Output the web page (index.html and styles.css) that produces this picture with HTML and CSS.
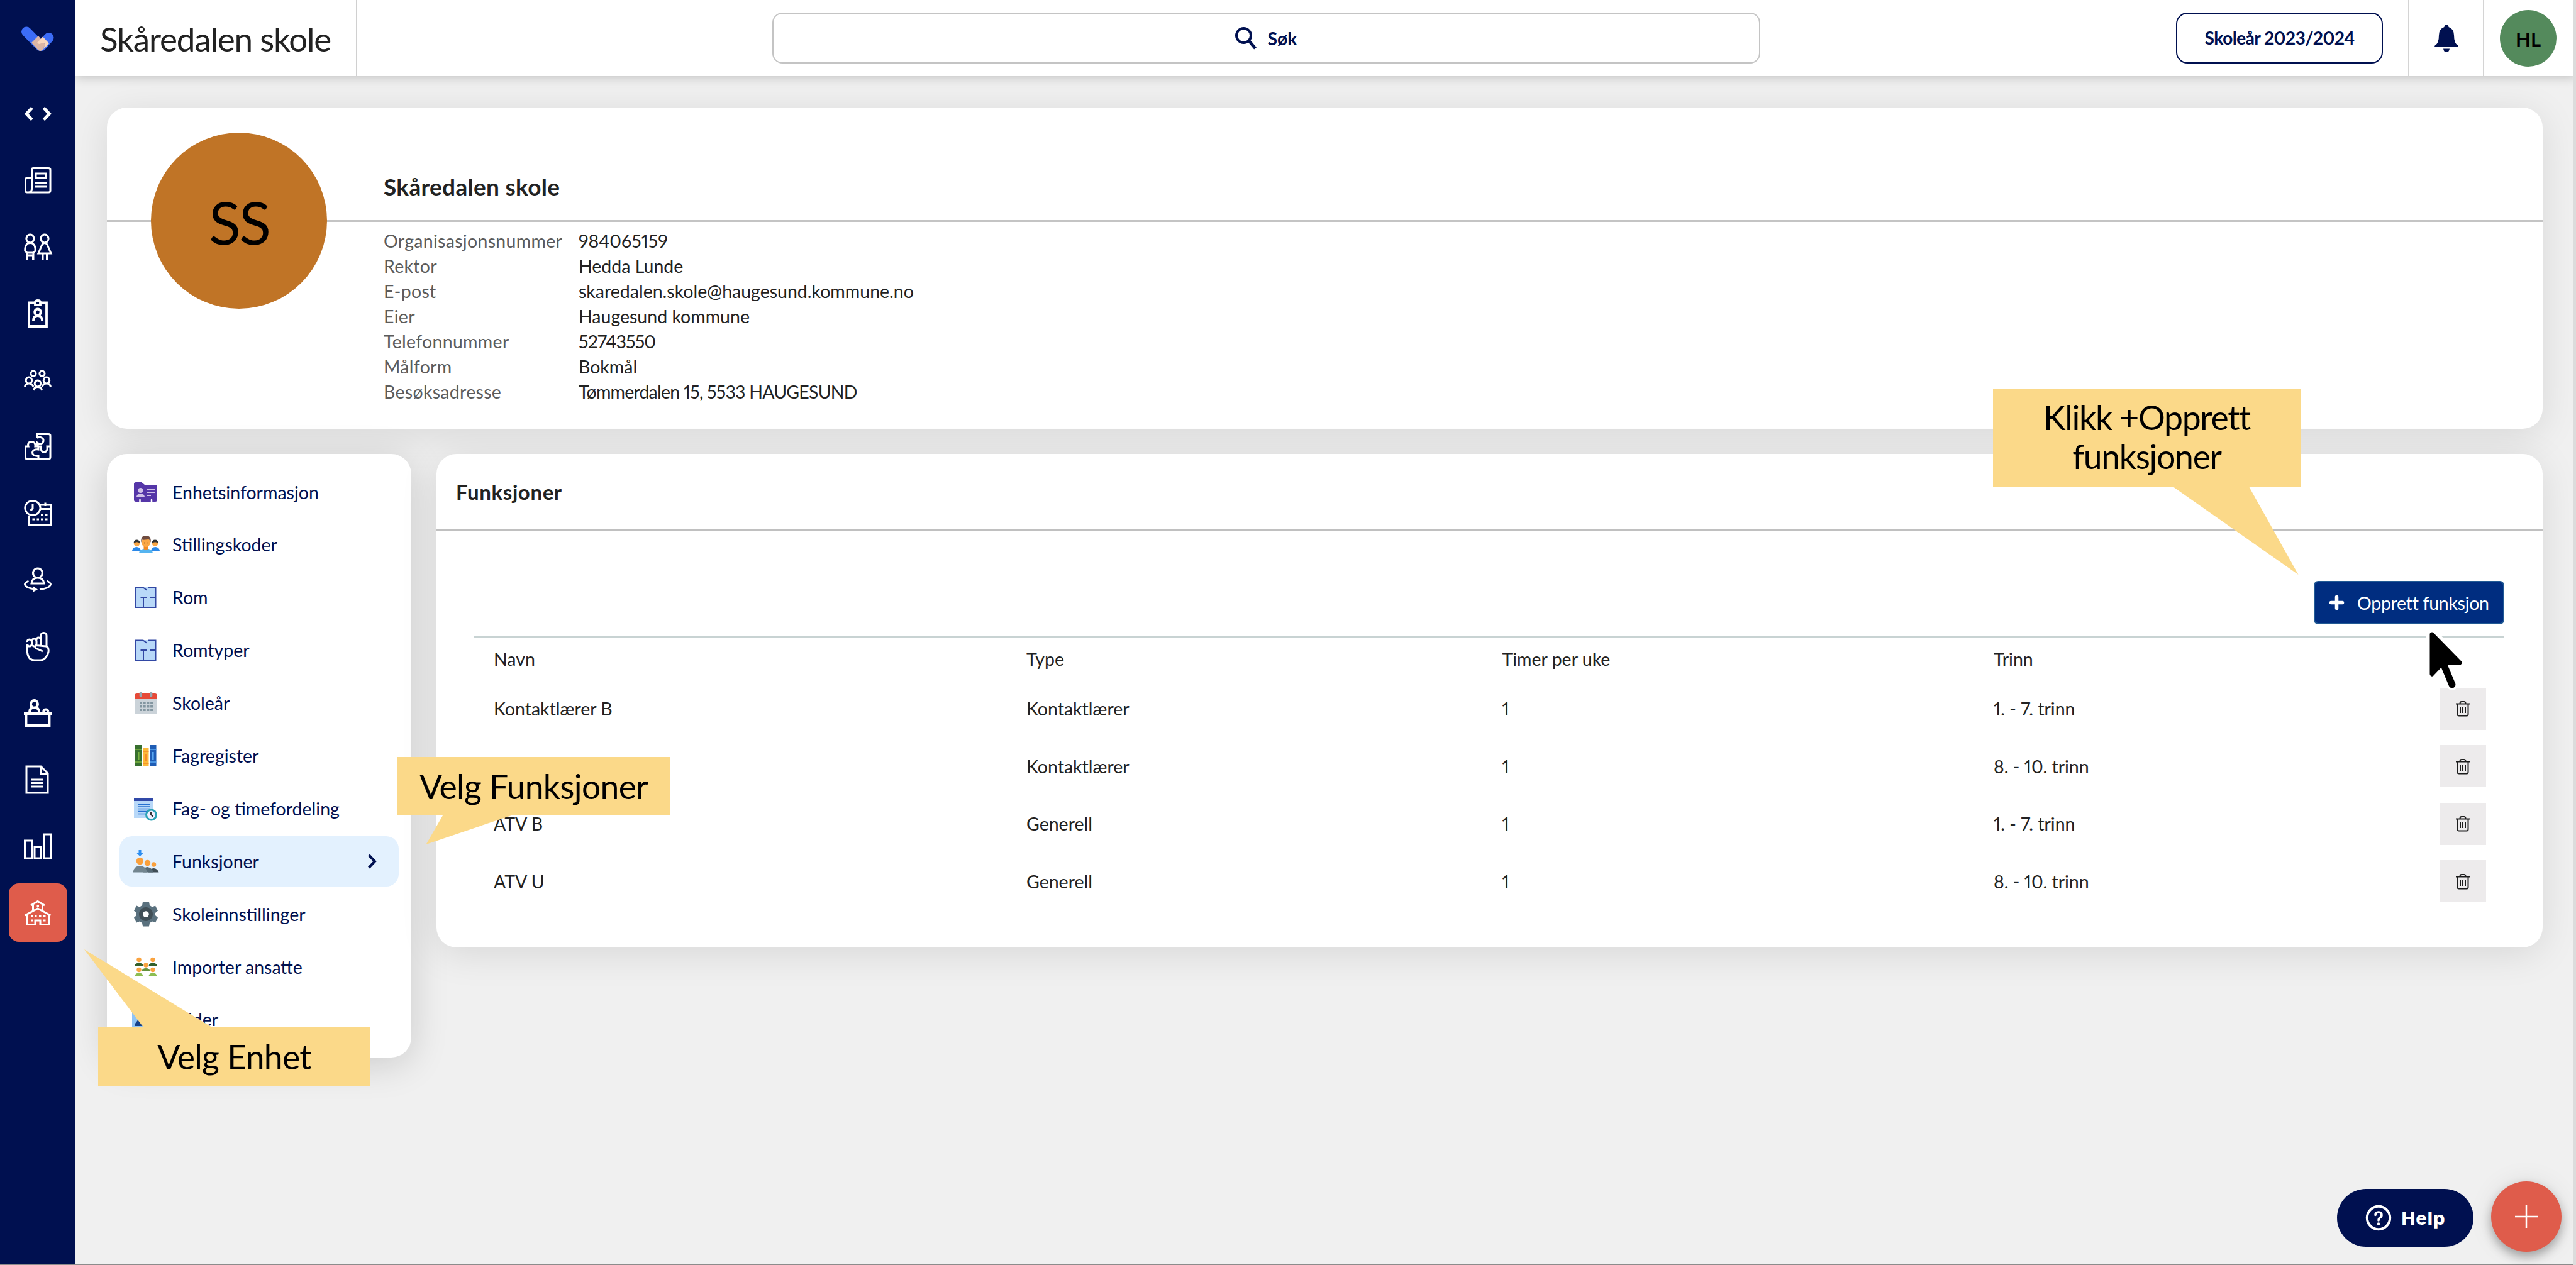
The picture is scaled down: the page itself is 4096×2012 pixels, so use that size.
FILE: index.html
```html
<!DOCTYPE html>
<html lang="no">

<head>
    <meta charset="UTF-8">
    <meta name="viewport" content="width=device-width, initial-scale=1.0">
    <title>Skåredalen skole - Funksjoner</title>
    <link rel="stylesheet" href="styles.css">
</head>

<body>
    <nav class="sidebar">
        <div class="logo">
            <svg width="52" height="40" viewBox="0 0 52 40">
                <path d="M8 8.5 L30 31" stroke="#3c6cf7" stroke-width="16" stroke-linecap="round"/>
                <path d="M43.500 18 L32 31" stroke="#3c6cf7" stroke-width="16" stroke-linecap="round"/>
                <path d="M16 26 L27 15 L38 29 L34 37 Q30 41 26 37 Z" fill="#dcb5a5"/>
                <path d="M25 26 L34 16.500 L44 27 L35 36.500 L38 28 Q36 25 28 28 Z" fill="#fbd7bd"/>
            </svg>
        </div>
        <a class="nav-item">
            <svg width="44" height="44" viewBox="0 0 44 44"><path class="arrows" d="M13 12.500 L4 22 L13 31.500 M31.500 12.500 L40.500 22 L31.500 31.500"/></svg>
        </a>
        <a class="nav-item">
            <svg width="44" height="44" viewBox="0 0 44 44"><path d="M12.500 5 Q12.500 2.500 15 2.500 H39 Q42 2.500 42 5 V38 Q42 41 39 41 H5 Q2.500 41 2.500 38 V21 Q2.500 18 5 18 H12 M12.500 5 V36 Q12 41 7 41"/><path d="M19 11 H35 V18.500 H19 Z M18 26 H36 M18 32 H36"/></svg>
        </a>
        <a class="nav-item">
            <svg width="44" height="44" viewBox="0 0 44 44"><path d="M10 2 A6 6.500 0 1 1 9.900 2 Z M33 2 A6 6.500 0 1 1 32.900 2 Z M5 42 V31 L1.800 28 Q1.500 15.500 10 15.500 Q18.500 15.500 18.200 28 L15 31 V42 M5 31 H15 M5.500 35 H14.500 V42 M5.500 42 V34"/><path d="M30 32 H23 L29 18 Q33 13 37 18 L43 32 H30 V43 M36.500 32 V43"/></svg>
        </a>
        <a class="nav-item">
            <svg width="44" height="46" viewBox="0 0 44 46"><path class="thick" d="M18 5.500 H8 V43 H36 V5.500 H26"/><path class="thick" d="M18 9 V5 Q18 2 22 2 Q26 2 26 5 V9 Z M22 15.500 A4.800 5 0 1 1 21.900 15.500 Z M15 34 Q15 26 22 26 Q29 26 29 34"/></svg>
        </a>
        <a class="nav-item">
            <svg width="44" height="36" viewBox="0 0 44 36"><path d="M15 3 A4.200 4.200 0 1 1 14.900 3 Z M29 3 A4.200 4.200 0 1 1 28.900 3 Z M8 13 A4.800 5 0 1 1 7.900 13 Z M36 13 A4.800 5 0 1 1 35.900 13 Z M22 18 A4.800 5 0 1 1 21.900 18 Z M1.500 29 Q2 23 8 23 Q13 23 15 28 M42.500 29 Q42 23 36 23 Q31 23 29 28 M15.500 34 Q16 28.500 22 28.500 Q28 28.500 28.500 34"/></svg>
        </a>
        <a class="nav-item">
            <svg width="44" height="44" viewBox="0 0 44 44"><path d="M21 9 V2.500 H39 Q42 2.500 42 5 V39 Q42 42 39 42 H5 Q2.500 42 2.500 39 V22 H7 Q5 15 12 14.500 Q19 15 18 22 H23 Q22 20 21 19 V16 Q26 20 30 16 Q33 11 28 8 Q24 6 21 9 M23 42 V37 Q14 38 13.500 32 Q14 26 23 27 V22 H27 Q26 31 32 31 Q38 31 37 22 H42"/></svg>
        </a>
        <a class="nav-item">
            <svg width="44" height="44" viewBox="0 0 44 44"><path d="M14 2.500 A12 11.500 0 1 1 13.900 2.500 Z M14 8 V15 L10.500 18"/><path d="M25 9 H42.500 V41 H8.500 V26 M26 15.500 H42 M34 5.500 V11"/><path d="M27 24.500 H30.500 M34 24.500 H37.500 M13.500 32 H17 M20.500 32 H24 M27 32 H30.500 M34 32 H37.500"/></svg>
        </a>
        <a class="nav-item">
            <svg width="44" height="40" viewBox="0 0 44 40"><path d="M22 2 A7.500 7.500 0 1 1 21.900 2 Z M12 26 Q13 17 22 17 Q31 17 32 26 Z M7.500 22 Q1 25 1.500 28 Q3 33 17 35 M36.500 22 Q43 25 42.500 28 Q40 34 25 35.500"/><path class="solid" d="M14 30 L22 35.500 L14 40 Z"/></svg>
        </a>
        <a class="nav-item">
            <svg width="44" height="48" viewBox="0 0 44 48"><path d="M5.500 17 Q5 13 9 13 Q12.500 13 12.500 17 V20 Q12 24 9 24 Q5.500 24 5.500 20 V34 Q7 46 17 46 H26 Q35 46 39 33 Q40 25 35 24 L20 22.500 Q16 23 19 27 L30 32 M12.500 15 Q13 12 16.500 12 Q20 12 20 16 V20 Q19 24 16 24 Q12.500 23 12.500 20 M20 14 Q20 10 23.500 10 Q27 10 27 14 V23 M27 12 V7 Q27 2.500 31.500 2.500 Q36 2.500 36 7 V24"/></svg>
        </a>
        <a class="nav-item">
            <svg width="44" height="46" viewBox="0 0 44 46"><path class="thick" d="M16.500 3 A5.500 6 0 1 1 16.400 3 Z M9 21 Q9 14.500 16.500 14.500 Q24 14.500 24 21 M31 21 Q31.500 17.500 35 17.500 Q38 17.500 38.500 21 M0 24 H44 M3.500 24 V43 H40.500 V24"/></svg>
        </a>
        <a class="nav-item">
            <svg width="44" height="46" viewBox="0 0 44 46"><path d="M4 2 H27 L38 13 V44 H4 Z M26.500 2 V14 H38 M11 23 H30.500 M11 28.500 H30.500 M11 34 H30.500"/></svg>
        </a>
        <a class="nav-item">
            <svg width="44" height="44" viewBox="0 0 44 44"><path d="M1.500 13 H12.500 V41 H1.500 Z M17 23 H27.500 V41 H17 Z M32 3 H42.500 V41 H32 Z"/></svg>
        </a>
        <a class="nav-item">
            <span class="nav-active">
                <svg width="44" height="42" viewBox="0 0 44 42"><path d="M11 9 L22 2.500 L33 9 M14.500 8 V17 M29.500 8 V17 M1.500 25 L22 14 L42.500 25 M4.500 24 V39.500 H18 V33 H26 V39.500 H39.500 V24"/><path d="M20.500 9.500 H24 M11 26 H14.500 M17 26 H20.500 M24 26 H27.500 M31 26 H34.500 M11 33 H14.500 M31 33 H34.500"/></svg>
            </span>
        </a>
    </nav>

    <div class="main">
        <header class="topbar">
            <div class="school-name">Skåredalen skole</div>
            <div class="search">
                <svg width="34" height="36" viewBox="0 0 34 36"><circle cx="13.500" cy="13.500" r="11.500" fill="none" stroke="#001050" stroke-width="4"/><path d="M22 22 L32 34" stroke="#001050" stroke-width="5"/></svg>
                <span>Søk</span>
            </div>
            <div class="year">Skoleår 2023/2024</div>
            <div class="bell">
                <svg width="38" height="44" viewBox="0 0 38 44"><path fill="#001050" d="M19 0 Q22 0 22.500 4 Q31 7 31 17 Q31 30 37 33 Q38 34 38 35.500 H0 Q0 34 1 33 Q7 30 7 17 Q7 7 15.500 4 Q16 0 19 0 Z M14 38.500 H24 Q23 44 19 44 Q15 44 14 38.500 Z"/></svg>
            </div>
            <div class="user"><span>HL</span></div>
        </header>

        <section class="card school">
            <div class="school-head"><h1>Skåredalen skole</h1></div>
            <div class="avatar">SS</div>
            <dl class="details">
                <dt>Organisasjonsnummer</dt><dd>984065159</dd>
                <dt>Rektor</dt><dd>Hedda Lunde</dd>
                <dt>E-post</dt><dd>skaredalen.skole@haugesund.kommune.no</dd>
                <dt>Eier</dt><dd>Haugesund kommune</dd>
                <dt>Telefonnummer</dt><dd class="tight">52743550</dd>
                <dt>Målform</dt><dd>Bokmål</dd>
                <dt>Besøksadresse</dt><dd class="tight">Tømmerdalen 15, 5533 HAUGESUND</dd>
            </dl>
        </section>

        <div class="columns">
            <aside class="card menu">
                <a class="menu-item">
                    <svg width="44" height="40" viewBox="0 0 44 40"><path fill="#5536a8" d="M3 7 Q3 4 6 4 H15 L20 8 H37 Q40 8 40 11 V32 Q40 35 37 35 H6 Q3 35 3 32 Z"/><g fill="#d0c1e8"><circle cx="13.500" cy="17" r="4"/><path d="M7 27 Q8 22 13.500 22 Q19 22 20 27 Z M23 14 H36 V16 H23 Z M23 19 H36 V21 H23 Z M23 24 H30 V26 H23 Z"/></g><path d="M12.500 32 V36 M31 32 V36" stroke="#fff" stroke-width="2.500" stroke-linecap="round"/></svg>
                    <span>Enhetsinformasjon</span>
                </a>
                <a class="menu-item">
                    <svg width="44" height="40" viewBox="0 0 44 40"><path fill="#2b88e8" d="M0 30 Q1 24 7 24 Q13 24 14 30 Z M30 30 Q31 24 37 24 Q43 24 44 30 Z"/><g fill="#fba745"><circle cx="7.500" cy="18.500" r="4.700"/><circle cx="36.500" cy="18.500" r="4.700"/></g><path fill="#333" d="M2.500 18 Q3 12.500 7.500 12.500 Q12 12.500 12.500 18 Q8 14.500 2.500 18 Z M31.500 18 Q32 12.500 36.500 12.500 Q41 12.500 41.500 18 Q37 14.500 31.500 18 Z"/><path fill="#55b4f0" d="M11 34 Q12 26.500 22 26.500 Q32 26.500 33 34 Z"/><path fill="#f08a24" d="M18.500 23 H25.500 V27 Q22 31 18.500 27 Z"/><circle cx="22" cy="17" r="7" fill="#fba745"/><path fill="#6f4c41" d="M14.500 17 Q13 6 22 6 Q31 6 29.500 17 Q28 12 26 12 Q18 13 16 12.500 Z"/><path d="M19 17.500 H20 M24.500 17.500 H25.500" stroke="#6a3c16" stroke-width="1.500"/></svg>
                    <span>Stillingskoder</span>
                </a>
                <a class="menu-item">
                    <svg width="44" height="40" viewBox="0 0 44 40"><path fill="#b8d8f8" d="M5 4 H38 V36 H5 Z"/><path class="plan" d="M26 4.500 H37.500 V36 H6 V4.500 H17.500 L24 9 M13.500 20 H23 M18 20 V36 M29 20 H38"/></svg>
                    <span>Rom</span>
                </a>
                <a class="menu-item">
                    <svg width="44" height="40" viewBox="0 0 44 40"><path fill="#b8d8f8" d="M5 4 H38 V36 H5 Z"/><path class="plan" d="M26 4.500 H37.500 V36 H6 V4.500 H17.500 L24 9 M13.500 20 H23 M18 20 V36 M29 20 H38"/></svg>
                    <span>Romtyper</span>
                </a>
                <a class="menu-item">
                    <svg width="44" height="40" viewBox="0 0 44 40"><rect x="4" y="5" width="36" height="33" rx="4" fill="#cbd3d9"/><path fill="#e64a38" d="M4 14 V9 Q4 5 8 5 H36 Q40 5 40 9 V14 Z"/><path d="M13.500 4 V9 M30.500 4 V9" stroke="#97a8b1" stroke-width="3.600" stroke-linecap="round"/><path d="M12 20 H33 M12 25.500 H33 M12 31 H33" stroke="#8396a0" stroke-width="4" stroke-dasharray="4 1.700"/></svg>
                    <span>Skoleår</span>
                </a>
                <a class="menu-item">
                    <svg width="44" height="40" viewBox="0 0 44 40"><path fill="#38702f" d="M5 3 H15.500 V37 H5 Z"/><path fill="#fcb93a" d="M17 8 H26.500 V37 H17 Z"/><path fill="#1f5db5" d="M28 3 H38.500 V37 H28 Z"/><path d="M5 10 H15.500 M5 30 H15.500" stroke="#7cb342" stroke-width="1.500"/><path d="M17 13 H26.500 M17 32 H26.500" stroke="#f58b27" stroke-width="1.500"/><path d="M28 10 H38.500 M28 30 H38.500" stroke="#5aa8f2" stroke-width="1.500"/><path d="M10.300 14 V27" stroke="#7cb342" stroke-width="2.600"/><path d="M21.800 17 V28" stroke="#f58b27" stroke-width="2.200"/><path d="M33.300 14 V27" stroke="#5aa8f2" stroke-width="2.600"/></svg>
                    <span>Fagregister</span>
                </a>
                <a class="menu-item">
                    <svg width="44" height="40" viewBox="0 0 44 40"><path fill="#b8d8f8" d="M3 3 H34 V35 H3 Z"/><path fill="#3149a8" d="M3 3 H34 V8 H3 Z"/><path d="M9.500 13.500 H12 M9.500 17 H12 M9.500 20.500 H12 M9.500 24.500 H12 M9.500 28.500 H12 M13 13.500 H28 M13 17 H28 M13 20.500 H28 M13 24.500 H24 M13 28.500 H22" stroke="#2670d0" stroke-width="1.700"/><circle cx="30.500" cy="30" r="8" fill="#eef" stroke="#2ba3b6" stroke-width="3"/><path d="M30 25.500 V30 L33.500 32.500" fill="none" stroke="#222" stroke-width="1.800"/></svg>
                    <span>Fag- og timefordeling</span>
                </a>
                <a class="menu-item active">
                    <svg width="44" height="40" viewBox="0 0 44 40"><path fill="#2d8ef0" d="M10.500 2 H14.500 V6.500 H18 L12.500 12 L7 6.500 H10.500 Z"/><g fill="#faa03c"><circle cx="12.500" cy="19.500" r="5.700"/><circle cx="24.500" cy="22.500" r="4.800"/><circle cx="34.500" cy="25" r="3.800"/></g><path fill="#3f4d55" d="M26 37.500 Q28 31 34.500 31 Q40 31 42.500 37.500 Z"/><path fill="#566a75" d="M18 37.500 Q18 29 24.500 29 Q32 30 34 37.500 Z"/><path fill="#72858f" d="M1.500 37.500 Q3 27 12.500 27 Q22 27 24 37.500 Z"/></svg>
                    <span>Funksjoner</span>
                    <svg class="chevron" width="16" height="24" viewBox="0 0 16 24"><path d="M2.500 2 L12 12 L2.500 22" fill="none" stroke="#001050" stroke-width="4"/></svg>
                </a>
                <a class="menu-item">
                    <svg width="44" height="40" viewBox="0 0 44 40"><path fill="#5a717e" d="M17 0.500 H27 L28 6 L32 8.500 L37 6.500 L41 14.500 L37 18 V22 L41 25.500 L37 33.500 L32 31.500 L28 34 L27 39.500 H17 L16 34 L12 31.500 L7 33.500 L3 25.500 L7 22 V18 L3 14.500 L7 6.500 L12 8.500 L16 6 Z"/><circle cx="22" cy="20" r="11" fill="#414f57"/><circle cx="22" cy="20" r="4.800" fill="#fff"/></svg>
                    <span>Skoleinnstillinger</span>
                </a>
                <a class="menu-item">
                    <svg width="44" height="40" viewBox="0 0 44 40"><g fill="#faa33f"><circle cx="11" cy="8.500" r="3.700"/><circle cx="33" cy="8.500" r="3.700"/><circle cx="22" cy="17" r="3.700"/><circle cx="11" cy="24.500" r="3.700"/><circle cx="33" cy="24.500" r="3.700"/></g><path fill="#33602b" d="M4.500 18 Q5 13.500 11 13.500 Q17 13.500 17.500 18 Z M26.500 18 Q27 13.500 33 13.500 Q39 13.500 39.500 18 Z"/><path fill="#64923d" d="M15.500 27 Q16 22 22 22 Q28 22 28.500 27 Z"/><path fill="#8cbd52" d="M4.500 34.500 Q5 29.500 11 29.500 Q17 29.500 17.500 34.500 Z M26.500 34.500 Q27 29.500 33 29.500 Q39 29.500 39.500 34.500 Z"/></svg>
                    <span>Importer ansatte</span>
                </a>
                <a class="menu-item">
                    <svg width="44" height="40" viewBox="0 0 44 40"><path fill="#8fc4f5" d="M0 5 H40 V36 H0 Z"/><path fill="#16428a" d="M5 27 L11 19 L20 31 H5 Z"/></svg>
                    <span>Bilder</span>
                </a>
            </aside>

            <section class="card functions">
                <h2>Funksjoner</h2>
                <div class="toolbar">
                    <button class="create">
                        <svg width="23" height="23" viewBox="0 0 23 23"><path d="M11.500 2.500 V20.500 M2.500 11.500 H20.500" stroke="#fff" stroke-width="5.500" stroke-linecap="round"/></svg>
                        <span>Opprett funksjon</span>
                    </button>
                </div>
                <div class="table">
                    <div class="row head"><span>Navn</span><span>Type</span><span>Timer per uke</span><span>Trinn</span></div>
                    <div class="row"><span>Kontaktlærer B</span><span>Kontaktlærer</span><span>1</span><span>1. - 7. trinn</span>
                        <button class="trash"><svg width="24" height="26" viewBox="0 0 24 26"><path d="M1 5.500 H23 M7.500 5 Q7.500 2 10 2 H14 Q16.500 2 16.500 5 M3.500 6 V22 Q3.500 24.500 6 24.500 H18 Q20.500 24.500 20.500 22 V6 M8 10 V20 M12 10 V20 M16 10 V20"/></svg></button></div>
                    <div class="row"><span></span><span>Kontaktlærer</span><span>1</span><span>8. - 10. trinn</span>
                        <button class="trash"><svg width="24" height="26" viewBox="0 0 24 26"><path d="M1 5.500 H23 M7.500 5 Q7.500 2 10 2 H14 Q16.500 2 16.500 5 M3.500 6 V22 Q3.500 24.500 6 24.500 H18 Q20.500 24.500 20.500 22 V6 M8 10 V20 M12 10 V20 M16 10 V20"/></svg></button></div>
                    <div class="row"><span>ATV B</span><span>Generell</span><span>1</span><span>1. - 7. trinn</span>
                        <button class="trash"><svg width="24" height="26" viewBox="0 0 24 26"><path d="M1 5.500 H23 M7.500 5 Q7.500 2 10 2 H14 Q16.500 2 16.500 5 M3.500 6 V22 Q3.500 24.500 6 24.500 H18 Q20.500 24.500 20.500 22 V6 M8 10 V20 M12 10 V20 M16 10 V20"/></svg></button></div>
                    <div class="row"><span>ATV U</span><span>Generell</span><span>1</span><span>8. - 10. trinn</span>
                        <button class="trash"><svg width="24" height="26" viewBox="0 0 24 26"><path d="M1 5.500 H23 M7.500 5 Q7.500 2 10 2 H14 Q16.500 2 16.500 5 M3.500 6 V22 Q3.500 24.500 6 24.500 H18 Q20.500 24.500 20.500 22 V6 M8 10 V20 M12 10 V20 M16 10 V20"/></svg></button></div>
                </div>
            </section>
        </div>
    </div>

    <!-- guide callouts -->
    <div class="callout enhet">
        <svg width="433" height="124" viewBox="0 0 433 124"><path d="M72 124 L-22 0 L181 124 Z"/></svg>
        <p>Velg Enhet</p>
    </div>
    <div class="callout velg">
        <svg width="433" height="47" viewBox="0 0 433 47"><path d="M72 0 L45.500 46 L181 0 Z"/></svg>
        <p>Velg Funksjoner</p>
    </div>
    <div class="callout klikk">
        <svg width="489" height="141" viewBox="0 0 489 141"><path d="M286 0 L485.500 140 L407 0 Z"/></svg>
        <p>Klikk +Opprett<br>funksjoner</p>
    </div>
    <svg class="cursor" width="66" height="108" viewBox="0 0 66 108">
        <path d="M12 12 L56 57 H33 L44 92 L29 60 L12 75 Z" fill="#fff" stroke="#fff" stroke-width="18" stroke-linejoin="round"/>
        <path d="M12 12 L56 57 H29 L12 75 Z" stroke="#000" stroke-width="7" stroke-linejoin="round"/>
        <path d="M29 56 L44 92" stroke="#000" stroke-width="11" stroke-linecap="round"/>
    </svg>

    <div class="floating">
        <button class="help">
            <svg width="42" height="42" viewBox="0 0 42 42"><circle cx="21" cy="21" r="18.200" fill="none" stroke="#fff" stroke-width="4"/><path d="M16 16.500 Q16 12 21 12 Q26 12 26 16.500 Q26 19 23.500 20.500 Q21 22 21 25" fill="none" stroke="#fff" stroke-width="3.600" stroke-linecap="round"/><circle cx="21" cy="30.500" r="2.300" fill="#fff"/></svg>
            <span>Help</span>
        </button>
        <button class="fab">
            <svg width="36" height="36" viewBox="0 0 36 36"><path d="M18 0 V36 M0 18 H36" stroke="#fff" stroke-width="2.500"/></svg>
        </button>
    </div>
    <div class="scroll"></div>
</body>

</html>
```
FILE: styles.css
```css
*{
    margin: 0;
    padding: 0;
    box-sizing: border-box;
}
body{
    width: 4096px;
    height: 2012px;
    display: flex;
    overflow: hidden;
    background-color: #f0f0f0;
    border-bottom: 1px solid #8c8c8c;
    font-family: "Lato", sans-serif;
    font-variant-numeric: proportional-nums;
    font-size: 28.5px;
    color: #222;
}
button{
    border: none;
    font: inherit;
}
svg{
    display: block;
    flex: none;
    overflow: visible;
}

/* sidebar */
.sidebar{
    width: 120px;
    flex: none;
    background-color: #001050;
    z-index: 2;
}
.logo{
    height: 128px;
    padding: 42px 0 0 34px;
}
.logo svg{
    overflow: hidden;
    border-radius: 0 0 8px 8px;
}
.nav-item{
    height: 105.9px;
    display: flex;
    align-items: center;
    justify-content: center;
}
.nav-item path{
    fill: none;
    stroke: #fff;
    stroke-width: 3;
}
.nav-item .thick{
    stroke-width: 3.8;
}
.nav-item .arrows{
    stroke-width: 4.8;
}
.nav-item .solid{
    fill: #fff;
    stroke: none;
}
.nav-active{
    width: 93px;
    height: 93px;
    border-radius: 16px;
    background-color: #df5c4b;
    display: flex;
    align-items: center;
    justify-content: center;
}

/* top bar */
.main{
    flex: 1;
}
.topbar{
    height: 121px;
    display: flex;
    align-items: center;
    background-color: #fff;
    box-shadow: 0 2px 16px rgba(0, 0, 0, 0.2);
}
.school-name{
    width: 448px;
    height: 121px;
    padding-left: 39px;
    line-height: 123px;
    font-size: 53px;
    letter-spacing: -1.2px;
    border-right: 2px solid #d0d0d0;
    white-space: nowrap;
}
.search{
    width: 1571px;
    height: 81px;
    margin-left: 660px;
    border: 2px solid #c4c4c4;
    border-radius: 16px;
    display: flex;
    align-items: center;
    justify-content: center;
    gap: 17px;
    font-weight: 700;
    color: #001050;
}
.year{
    width: 329px;
    height: 81px;
    margin-left: 661px;
    border: 2.5px solid #001050;
    border-radius: 18px;
    font-weight: 700;
    letter-spacing: -0.7px;
    color: #001050;
    line-height: 77px;
    text-align: center;
    white-space: nowrap;
}
.bell{
    width: 121px;
    height: 121px;
    margin-left: 40px;
    border: solid #d4d4d4;
    border-width: 0 2px;
    display: flex;
    align-items: center;
    justify-content: center;
}
.user{
    margin-left: 25px;
    width: 90px;
    height: 90px;
    border-radius: 50%;
    background-color: #548a5c;
    color: #000;
    font-size: 31px;
    font-weight: 700;
    line-height: 92px;
    text-align: center;
}

/* cards */
.card{
    background-color: #fff;
    border-radius: 32px;
    box-shadow: 0 10px 60px rgba(0, 0, 0, 0.1);
}
.school{
    height: 511px;
    margin: 50px 53px 0 50px;
    display: grid;
    grid-template-columns: 350px 1fr;
    grid-template-rows: 182px 1fr;
}
.school-head{
    grid-area: 1 / 1 / 2 / 3;
    border-bottom: 3px solid #c4c4c4;
    padding: 101px 0 0 440px;
}
.school-head h1{
    font-size: 37px;
    font-weight: 700;
    letter-spacing: 0.3px;
    line-height: 50px;
}
.avatar{
    grid-area: 1 / 1 / 3 / 2;
    width: 280px;
    height: 280px;
    margin: 40px 0 0 70px;
    border-radius: 50%;
    background-color: #c07426;
    color: #000;
    font-size: 94px;
    letter-spacing: -3px;
    line-height: 284px;
    text-align: center;
}
.details{
    grid-area: 2 / 2 / 3 / 3;
    padding: 9.5px 0 0 90px;
    display: grid;
    grid-template-columns: 310px 1fr;
    align-content: start;
    line-height: 40px;
}
.details dt{
    color: #5c5c5c;
    letter-spacing: 0.3px;
}
.details .tight{
    letter-spacing: -0.8px;
}
.columns{
    display: flex;
    align-items: flex-start;
    gap: 40px;
    margin: 40px 53px 0 50px;
}

/* left menu */
.menu{
    width: 484px;
    height: 960px;
    padding: 20.5px 20px;
    display: flex;
    flex-direction: column;
    gap: 3.9px;
    box-shadow: 0 10px 60px rgba(0, 0, 0, 0.16);
}
.menu-item{
    height: 80px;
    padding: 0 34px 0 20px;
    border-radius: 20px;
    display: flex;
    align-items: center;
    gap: 20px;
    color: #001050;
    white-space: nowrap;
}
.menu-item.active{
    background-color: #e3f1fe;
}
.chevron{
    margin-left: auto;
}
.plan{
    fill: none;
    stroke: #3248a4;
    stroke-width: 2;
}

/* functions table */
.functions{
    flex: 1;
    height: 785px;
}
.functions h2{
    height: 122px;
    padding-left: 31px;
    border-bottom: 3px solid #c0c0c0;
    font-size: 33px;
    font-weight: 700;
    letter-spacing: 0.6px;
    line-height: 121px;
}
.toolbar{
    display: flex;
    justify-content: flex-end;
    padding: 80px 61px 19px 0;
}
.create{
    width: 303px;
    height: 69px;
    border: 2px solid #215a94;
    border-radius: 7px;
    background-color: #002d80;
    color: #fff;
    letter-spacing: -0.3px;
    display: flex;
    align-items: center;
    padding-left: 23px;
    gap: 21px;
    white-space: nowrap;
}
.table{
    margin: 0 61px 0 60px;
    border-top: 2px solid #c8d3d3;
}
.row{
    height: 91.5px;
    display: grid;
    grid-template-columns: 847px 756.5px 781.5px 708.5px 74px;
    align-items: center;
    padding-left: 31px;
}
.row.head{
    height: 67.5px;
}
.trash{
    width: 74px;
    height: 67px;
    background-color: #edebec;
    display: flex;
    align-items: center;
    justify-content: center;
}
.trash path{
    fill: none;
    stroke: #1e1e1e;
    stroke-width: 2;
}

/* callouts */
.callout{
    position: absolute;
    z-index: 3;
    font-size: 53.5px;
    letter-spacing: -0.7px;
    color: #000;
}
.callout p{
    background-color: #fbd989;
    text-align: center;
    line-height: 93px;
    white-space: nowrap;
}
.callout path{
    fill: #fbd989;
}
.enhet{
    left: 156px;
    top: 1510px;
    width: 433px;
}
.velg{
    left: 632px;
    top: 1204px;
    width: 433px;
    display: flex;
    flex-direction: column-reverse;
}
.klikk{
    left: 3169px;
    top: 619px;
    width: 489px;
    display: flex;
    flex-direction: column-reverse;
    letter-spacing: -1.3px;
}
.klikk p{
    height: 155px;
    padding-top: 14px;
    line-height: 61.5px;
}
.cursor{
    position: absolute;
    left: 3855px;
    top: 997px;
    z-index: 3;
}

/* floating buttons */
.floating{
    position: absolute;
    right: 23px;
    bottom: 21px;
    display: flex;
    align-items: center;
    gap: 28px;
}
.help{
    width: 217px;
    height: 92px;
    margin-top: 4px;
    border-radius: 46px;
    background-color: #001050;
    color: #fff;
    font-family: "Inter", sans-serif;
    font-size: 29px;
    font-weight: 800;
    letter-spacing: 1px;
    display: flex;
    align-items: center;
    justify-content: center;
    gap: 16px;
}
.fab{
    width: 112px;
    height: 112px;
    border-radius: 50%;
    background-color: #df5c4b;
    box-shadow: 0 8px 16px rgba(0, 0, 0, 0.3), 0 0 40px rgba(0, 0, 0, 0.08);
    display: flex;
    align-items: center;
    justify-content: center;
}
.scroll{
    position: absolute;
    right: 0;
    top: 0;
    width: 4px;
    height: 2012px;
    background-color: #dcdcdc;
}
```
